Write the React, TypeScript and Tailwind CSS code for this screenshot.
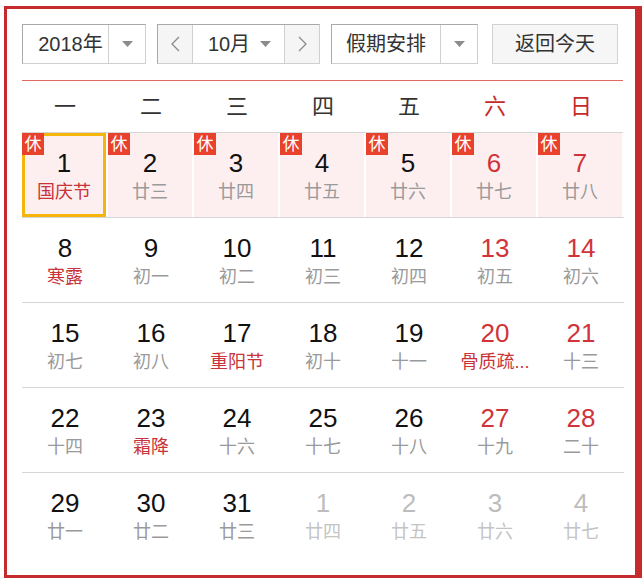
type Day = {
  day: number;
  lunar: string;
  festival?: boolean;
  rest?: boolean;
  other?: boolean;
  today?: boolean;
};

const weekdays = ["一", "二", "三", "四", "五", "六", "日"];

const weeks: Day[][] = [
  [
    { day: 1, lunar: "国庆节", festival: true, rest: true, today: true },
    { day: 2, lunar: "廿三", rest: true },
    { day: 3, lunar: "廿四", rest: true },
    { day: 4, lunar: "廿五", rest: true },
    { day: 5, lunar: "廿六", rest: true },
    { day: 6, lunar: "廿七", rest: true },
    { day: 7, lunar: "廿八", rest: true },
  ],
  [
    { day: 8, lunar: "寒露", festival: true },
    { day: 9, lunar: "初一" },
    { day: 10, lunar: "初二" },
    { day: 11, lunar: "初三" },
    { day: 12, lunar: "初四" },
    { day: 13, lunar: "初五" },
    { day: 14, lunar: "初六" },
  ],
  [
    { day: 15, lunar: "初七" },
    { day: 16, lunar: "初八" },
    { day: 17, lunar: "重阳节", festival: true },
    { day: 18, lunar: "初十" },
    { day: 19, lunar: "十一" },
    { day: 20, lunar: "骨质疏...", festival: true },
    { day: 21, lunar: "十三" },
  ],
  [
    { day: 22, lunar: "十四" },
    { day: 23, lunar: "霜降", festival: true },
    { day: 24, lunar: "十六" },
    { day: 25, lunar: "十七" },
    { day: 26, lunar: "十八" },
    { day: 27, lunar: "十九" },
    { day: 28, lunar: "二十" },
  ],
  [
    { day: 29, lunar: "廿一" },
    { day: 30, lunar: "廿二" },
    { day: 31, lunar: "廿三" },
    { day: 1, lunar: "廿四", other: true },
    { day: 2, lunar: "廿五", other: true },
    { day: 3, lunar: "廿六", other: true },
    { day: 4, lunar: "廿七", other: true },
  ],
];

function Caret() {
  return (
    <svg width="11" height="6" viewBox="0 0 11 6">
      <path d="M0 0 L11 0 L5.5 6 Z" fill="#8c8c8c" />
    </svg>
  );
}

function Chevron({ dir }: { dir: "left" | "right" }) {
  return (
    <svg width="9" height="16" viewBox="0 0 9 16">
      <path
        d={dir === "left" ? "M8 1 L1 8 L8 15" : "M1 1 L8 8 L1 15"}
        fill="none"
        stroke="#8a8a8a"
        strokeWidth="1.3"
      />
    </svg>
  );
}

function DayCell({ d, col, first }: { d: Day; col: number; first: boolean }) {
  const weekend = col >= 5;
  const numColor = d.other ? "text-[#bdbdbd]" : weekend ? "text-[#d0343a]" : "text-[#111]";
  const lunarColor = d.other
    ? "text-[#c4c4c4]"
    : d.festival
      ? "text-[#c8333a]"
      : "text-[#9a9a9a]";

  return (
    <div className={first ? "pr-[2px]" : ""}>
      <div className={`relative flex h-[84px] flex-col items-center pt-[15px] ${first ? "bg-[#fdeff0]" : ""}`}>
        {d.today && <div className="absolute inset-0 border-[3px] border-[#f6b50b]" />}
        {d.rest && (
          <span className="absolute left-0 top-0 z-10 flex h-[22px] w-[22px] items-center justify-center bg-[#e8412c] text-[17px] leading-none text-white">
            休
          </span>
        )}
        <span className={`text-[26px] leading-[30px] ${numColor}`}>{d.day}</span>
        <span className={`mt-[1px] text-[18px] leading-[26px] ${lunarColor}`}>{d.lunar}</span>
      </div>
    </div>
  );
}

export default function App() {
  return (
    <div
      className="h-[582px] w-[642px] bg-white pl-[4px] pt-[6px]"
      style={{ fontFamily: '"Liberation Sans", Arial, "Noto Sans CJK SC", sans-serif' }}
    >
      <div className="h-[572px] w-[638px] border-[3px] border-r-[7px] border-[#c62a2a] pl-[15px] pt-[15px]">
        {/* toolbar */}
        <div className="flex h-[40px] text-[20px] text-[#333]">
          <div className="flex w-[124px] border border-[#a9a9a9] border-b-[#cfcfcf] border-r-[#cfcfcf]">
            <div className="flex w-[85px] items-center justify-center pl-[10px]">2018年</div>
            <div className="flex flex-1 items-center justify-center border-l border-[#d0d0d0]">
              <Caret />
            </div>
          </div>

          <div className="ml-[11px] flex w-[163px] border border-[#a9a9a9] border-b-[#cfcfcf] border-r-[#cfcfcf]">
            <div className="flex w-[34px] items-center justify-center bg-[#f5f5f5]">
              <Chevron dir="left" />
            </div>
            <div className="flex flex-1 items-center justify-center gap-[10px] border-x border-[#d0d0d0] pl-[2px]">
              <span>10月</span>
              <Caret />
            </div>
            <div className="flex w-[34px] items-center justify-center bg-[#f5f5f5]">
              <Chevron dir="right" />
            </div>
          </div>

          <div className="ml-[11px] flex w-[147px] border border-[#a9a9a9] border-b-[#cfcfcf] border-r-[#cfcfcf]">
            <div className="flex w-[108px] items-center justify-center">假期安排</div>
            <div className="flex flex-1 items-center justify-center border-l border-[#d0d0d0]">
              <Caret />
            </div>
          </div>

          <div className="ml-[14px] flex w-[126px] items-center justify-center border border-[#d2d2d2] bg-[#f6f6f6]">
            返回今天
          </div>
        </div>

        <div className="mt-[16px] h-px w-[601px] bg-[#e2695f]" />

        {/* weekday header */}
        <div className="grid h-[51px] w-[602px] grid-cols-[repeat(7,86px)] items-center pb-[1px] text-[22px]">
          {weekdays.map((w, i) => (
            <div key={w} className={`text-center ${i >= 5 ? "text-[#c62a2a]" : "text-[#333]"}`}>
              {w}
            </div>
          ))}
        </div>

        {/* days */}
        <div className="w-[601px] border-t border-[#d6d6d6]">
          {weeks.map((week, r) => (
            <div
              key={r}
              className={`grid h-[85px] w-[602px] grid-cols-[repeat(7,86px)] ${r < weeks.length - 1 ? "border-b border-[#d6d6d6]" : ""}`}
            >
              {week.map((d, c) => (
                <DayCell key={c} d={d} col={c} first={r === 0} />
              ))}
            </div>
          ))}
        </div>
      </div>
    </div>
  );
}
